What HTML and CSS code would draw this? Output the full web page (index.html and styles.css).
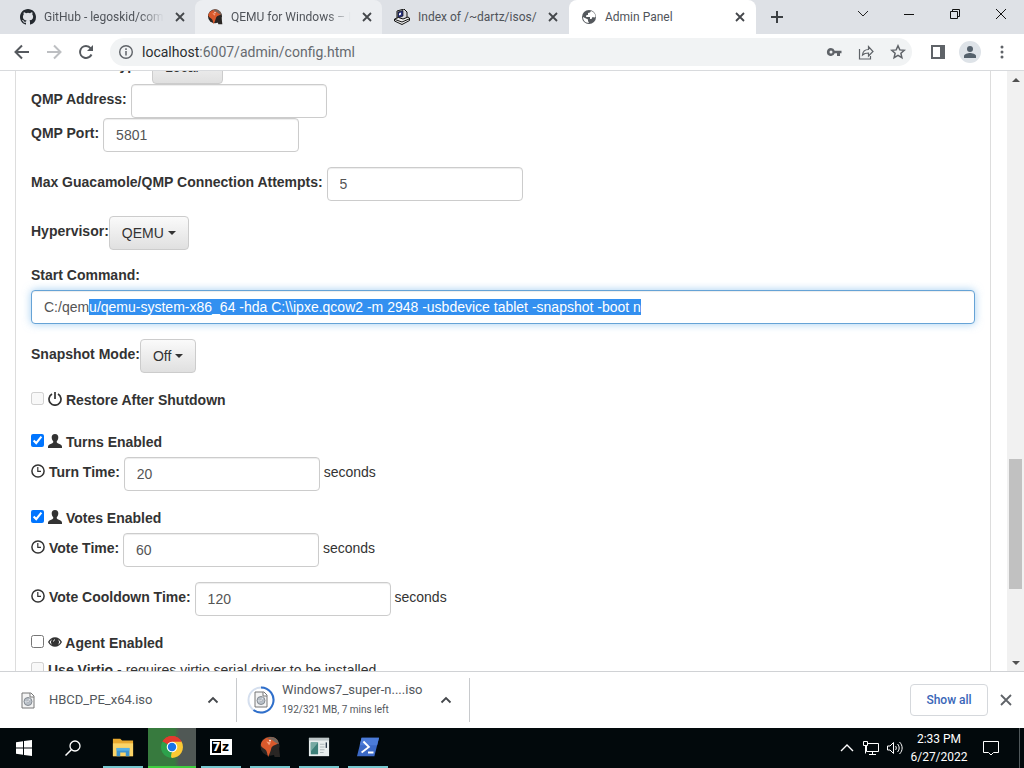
FILE: index.html
```html
<!DOCTYPE html>
<html lang="en">
<head>
    <meta charset="UTF-8">
    <meta name="viewport" content="width=device-width, initial-scale=1.0">
    <title>Admin Panel</title>
    <link rel="stylesheet" href="styles.css">
</head>
<body>
    <!-- shared icons -->
    <svg class="sprite" aria-hidden="true">
        <symbol id="close" viewBox="0 0 16 16"><path d="M4 4l8 8M12 4l-8 8" fill="none" stroke="currentColor" stroke-width="1.800"/></symbol>
        <symbol id="chevron" viewBox="0 0 16 16"><path d="M3.500 10.500L8 6l4.500 4.500" fill="none" stroke="currentColor" stroke-width="1.800"/></symbol>
        <symbol id="qemu" viewBox="0 0 24 24">
            <circle cx="12" cy="11" r="10.500" fill="#2a2624"/>
            <path d="M15 16l7-2 1 9h-6z" fill="#2a2624"/>
            <path d="M2 9C3 4 8 1 13 1c4 0 8 3 8 7-2 2-5 2-7 4-1 2-1 4-2 6l-2 5c-1-3-1-5-2-7-2-3-6-3-6-7z" fill="#d9592c"/>
            <path d="M13 1c5 0 8 3 9 8l-4-2-4-3-5-1z" fill="#75665d"/>
            <path d="M8 6l5 1-2 3z" fill="#f5a07c"/>
            <circle cx="12" cy="5" r="1" fill="#fff"/>
        </symbol>
        <symbol id="iso" viewBox="0 0 14 17">
            <path d="M1 1h9l3 3v12H1z" fill="#f4f4f4" stroke="#777"/>
            <path d="M9 1v4h4" fill="#fff" stroke="#777"/>
            <circle cx="7" cy="9.500" r="4" fill="#b9c0c8" stroke="#858b92"/>
            <path d="M4 10l3-.5 2-3" stroke="#e9edf0" fill="none"/>
            <circle cx="7" cy="9.500" r="1" fill="#fff" stroke="#858b92" stroke-width=".5"/>
        </symbol>
        <symbol id="user" viewBox="0 0 14 14"><path d="M7 0c2.300 0 3.500 1.600 3.300 3.600-.1 1.700-.7 2.900-1.500 3.700-.2 1 .1 1.500.9 1.900l2.800 1.200c1 .5 1.500 1.300 1.500 2.600v1H0v-1c0-1.300.5-2.100 1.500-2.600l2.800-1.200c.8-.4 1.100-.9.900-1.900-.8-.8-1.400-2-1.500-3.700C3.500 1.600 4.700 0 7 0z" fill="currentColor"/></symbol>
        <symbol id="time" viewBox="0 0 14 14"><circle cx="7" cy="7" r="6.100" fill="none" stroke="currentColor" stroke-width="1.500"/><path d="M6.800 3v4.300H10" fill="none" stroke="currentColor" stroke-width="1.200"/></symbol>
    </svg>

    <nav class="tab-strip">
        <div class="tab">
            <svg class="favicon" viewBox="0 0 16 16"><path fill="#24292f" d="M8 0C3.580 0 0 3.580 0 8c0 3.540 2.290 6.530 5.470 7.590.4.070.55-.17.55-.38 0-.19-.01-.82-.01-1.490-2.010.37-2.530-.49-2.690-.94-.09-.23-.48-.94-.82-1.130-.28-.15-.68-.52-.01-.53.63-.01 1.080.58 1.230.82.72 1.210 1.870.87 2.330.66.07-.52.28-.87.51-1.070-1.780-.2-3.640-.89-3.640-3.950 0-.87.31-1.590.82-2.150-.08-.2-.36-1.020.08-2.120 0 0 .67-.21 2.200.82a7.600 7.600 0 014 0c1.530-1.040 2.200-.82 2.200-.82.44 1.100.16 1.920.08 2.120.51.56.82 1.270.82 2.150 0 3.070-1.870 3.750-3.650 3.950.29.25.54.73.54 1.480 0 1.070-.01 1.930-.01 2.200 0 .21.15.46.55.38A8.010 8.010 0 0016 8c0-4.420-3.580-8-8-8z"/></svg>
            <a class="tab-title fade" href="#">GitHub - legoskid/com</a>
            <button class="tab-close" aria-label="Close tab"><svg><use href="#close"/></svg></button>
        </div>
        <div class="tab tab-hover">
            <svg class="favicon"><use href="#qemu"/></svg>
            <a class="tab-title fade" href="#">QEMU for Windows – I</a>
            <button class="tab-close" aria-label="Close tab"><svg><use href="#close"/></svg></button>
        </div>
        <div class="tab">
            <svg class="favicon" viewBox="0 0 16 16">
                <path d="M3 2l7-2 3 3v6l-7 3-3-3z" fill="#d6d6dc" stroke="#111"/>
                <path d="M4 3l5-1.500v5.500l-5 2z" fill="#27307f" stroke="#111" stroke-width=".7"/>
                <path d="M5 4.500l2-1v2l-2 1z" fill="#fff"/>
                <path d="M.5 10l4-1.500L9 10l5-2 1.500 1v2.500L8 15.500.5 12z" fill="#eee" stroke="#111"/>
                <path d="M1 10.500L8 13l7-3" stroke="#111" fill="none"/>
            </svg>
            <a class="tab-title" href="#">Index of /~dartz/isos/</a>
            <button class="tab-close" aria-label="Close tab"><svg><use href="#close"/></svg></button>
        </div>
        <div class="tab tab-active">
            <svg class="favicon" viewBox="0 0 16 16">
                <circle cx="8" cy="8" r="7" fill="#54585d"/>
                <path d="M10 2l-1 1.500-2 .5v2H5.500L5 8h4v2h1.500l1-2 2 .5 1-.5c0-3-2-5.500-4.500-6z" fill="#fff"/>
                <path d="M2 8l3 1.500 2 1V12l1 2c-4 0-6-3-6-6z" fill="#fff"/>
            </svg>
            <a class="tab-title" href="#">Admin Panel</a>
            <button class="tab-close" aria-label="Close tab"><svg><use href="#close"/></svg></button>
        </div>
        <button class="new-tab" aria-label="New tab"><svg viewBox="0 0 16 16"><path d="M8 2v12M2 8h12" stroke="#3c4043" stroke-width="2"/></svg></button>
        <div class="window-buttons">
            <button aria-label="Search tabs"><svg viewBox="0 0 12 12"><path d="M1 3l5 5 5-5" fill="none" stroke="#222"/></svg></button>
            <button aria-label="Minimize"><svg viewBox="0 0 12 12"><path d="M1 6.500h10" stroke="#111"/></svg></button>
            <button aria-label="Restore"><svg viewBox="0 0 12 12"><path d="M1.500 3.500h7v7h-7zM3.500 3.500v-2h7v7h-2" fill="none" stroke="#111"/></svg></button>
            <button aria-label="Close"><svg viewBox="0 0 12 12"><path d="M1 1l10 10M11 1L1 11" stroke="#111"/></svg></button>
        </div>
    </nav>

    <div class="toolbar">
        <button aria-label="Back"><svg viewBox="0 0 16 16"><path d="M15 8H2M8 1.500L1.500 8 8 14.500" fill="none" stroke="#55595e" stroke-width="2"/></svg></button>
        <button aria-label="Forward"><svg viewBox="0 0 16 16"><path d="M1 8h13M8 1.500L14.500 8 8 14.500" fill="none" stroke="#bdbfc2" stroke-width="2"/></svg></button>
        <button aria-label="Reload"><svg viewBox="0 0 16 16"><path d="M13.500 10.500A6 6 0 118 2c2 0 3.600.9 4.700 2.300" fill="none" stroke="#55595e" stroke-width="2"/><path d="M15 1v6H9z" fill="#55595e"/></svg></button>
        <div class="omnibox">
            <svg viewBox="0 0 16 16"><circle cx="8" cy="8" r="6.300" fill="none" stroke="#5f6368" stroke-width="1.400"/><path d="M8 7v4.500M8 4.300V6" stroke="#5f6368" stroke-width="1.500"/></svg>
            <a class="url" href="#"><span class="host">localhost</span>:6007/admin/config.html</a>
            <button aria-label="Passwords"><svg viewBox="0 0 16 16"><path d="M5 4a4 4 0 103.700 5.300H11V12h3V9.300h1.500V6.700H8.700A4 4 0 005 4zm0 2.500a1.500 1.500 0 110 3 1.500 1.500 0 010-3z" fill="#5f6368" fill-rule="evenodd"/></svg></button>
            <button aria-label="Share"><svg viewBox="0 0 16 16"><path d="M1.500 5v10h11v-3M4.500 11c.3-3.500 2.500-5.500 6-5.500V2.500l4.500 5-4.500 4.500V9C8 9 6 9.500 4.500 11z" fill="none" stroke="#5f6368" stroke-width="1.200"/></svg></button>
            <button aria-label="Bookmark"><svg viewBox="0 0 16 16"><path d="M8 1.800l1.800 4.100 4.500.4-3.400 3 1 4.400L8 11.400l-3.900 2.300 1-4.400-3.400-3 4.500-.4z" fill="none" stroke="#5f6368" stroke-width="1.500"/></svg></button>
        </div>
        <button aria-label="Side panel"><svg viewBox="0 0 16 16"><path d="M1 1h14v14H1zM3 3v10h7V3z" fill="#5f6368" fill-rule="evenodd"/></svg></button>
        <button class="profile" aria-label="Profile"><svg viewBox="0 0 16 16"><circle cx="8" cy="5" r="3" fill="#55616c"/><path d="M2 14v-2c0-2 4-3 6-3s6 1 6 3v2z" fill="#55616c"/></svg></button>
        <button class="menu" aria-label="Menu"><svg viewBox="0 0 16 16"><g fill="#5f6368"><circle cx="8" cy="3" r="1.500"/><circle cx="8" cy="8" r="1.500"/><circle cx="8" cy="13" r="1.500"/></g></svg></button>
    </div>

    <div class="viewport">
        <main class="page" id="page">
            <form class="panel">
                <div class="row tight">
                    <label for="connectionType">Connection Type:</label>
                    <select class="btn btn-local" id="connectionType"><option>Local</option></select>
                </div>
                <div class="row tight">
                    <label for="qmpAddress">QMP Address:</label>
                    <input class="field" type="text" id="qmpAddress">
                </div>
                <div class="row">
                    <label for="qmpPort">QMP Port:</label>
                    <input class="field" type="text" id="qmpPort" value="5801">
                </div>
                <div class="row">
                    <label for="attempts">Max Guacamole/QMP Connection Attempts:</label>
                    <input class="field" type="text" id="attempts" value="5">
                </div>
                <div class="row">
                    <label for="hypervisor">Hypervisor:</label><select class="btn btn-qemu" id="hypervisor"><option>QEMU</option></select>
                </div>
                <div class="group">
                    <label for="startCommand">Start Command:</label>
                    <input class="field" type="text" id="startCommand" spellcheck="false" value="C:/qemu/qemu-system-x86_64 -hda C:\\ipxe.qcow2 -m 2948 -usbdevice tablet -snapshot -boot n">
                </div>
                <div class="row">
                    <label for="snapshot">Snapshot Mode:</label><select class="btn btn-off" id="snapshot"><option>Off</option></select>
                </div>
                <div class="check spaced">
                    <input type="checkbox" id="restore" disabled>
                    <label for="restore"><svg class="glyph" viewBox="0 0 14 14"><path d="M4 2a6 6 0 106 0M7 0v7" fill="none" stroke="currentColor" stroke-width="1.700"/></svg> Restore After Shutdown</label>
                </div>
                <div class="check">
                    <input type="checkbox" id="turns" checked>
                    <label for="turns"><svg class="glyph"><use href="#user"/></svg> Turns Enabled</label>
                </div>
                <div class="row">
                    <label for="turnTime"><svg class="glyph"><use href="#time"/></svg> Turn Time:</label>
                    <input class="field" type="text" id="turnTime" value="20"> seconds
                </div>
                <div class="check">
                    <input type="checkbox" id="votes" checked>
                    <label for="votes"><svg class="glyph"><use href="#user"/></svg> Votes Enabled</label>
                </div>
                <div class="row">
                    <label for="voteTime"><svg class="glyph"><use href="#time"/></svg> Vote Time:</label>
                    <input class="field" type="text" id="voteTime" value="60"> seconds
                </div>
                <div class="row">
                    <label for="cooldown"><svg class="glyph"><use href="#time"/></svg> Vote Cooldown Time:</label>
                    <input class="field" type="text" id="cooldown" value="120"> seconds
                </div>
                <div class="check">
                    <input type="checkbox" id="agent">
                    <label for="agent"><svg class="glyph" viewBox="0 0 14 14"><path d="M0 7C3 .7 11 .7 14 7c-3 6.300-11 6.300-14 0z" fill="currentColor"/><path d="M1.500 7c.7-1.300 1.600-2.200 2.700-2.800a4.200 4.200 0 000 5.600C3.100 9.200 2.200 8.300 1.500 7zM12.500 7c-.7-1.300-1.600-2.200-2.700-2.800a4.200 4.200 0 010 5.600c1.100-.6 2-1.500 2.700-2.800z" fill="#fff"/><path d="M5.500 6.500c0-1 .6-1.600 1.500-1.700" stroke="#fff" fill="none"/></svg> Agent Enabled</label>
                </div>
                <div class="check">
                    <input type="checkbox" id="virtio" disabled>
                    <label for="virtio">Use Virtio</label> - requires virtio serial driver to be installed
                </div>
            </form>
        </main>
        <div class="scrollbar">
            <button aria-label="Scroll up"><svg viewBox="0 0 8 4"><path d="M0 4l4-4 4 4z" fill="#505050"/></svg></button>
            <div class="track"><div class="thumb"></div></div>
            <button aria-label="Scroll down"><svg viewBox="0 0 8 4"><path d="M0 0l4 4 4-4z" fill="#505050"/></svg></button>
        </div>
    </div>

    <footer class="downloads">
        <div class="download">
            <svg class="file" viewBox="0 0 14 17"><use href="#iso"/></svg>
            <div class="download-text"><a href="#">HBCD_PE_x64.iso</a></div>
            <button aria-label="Download options"><svg><use href="#chevron"/></svg></button>
        </div>
        <div class="download">
            <svg class="progress" viewBox="0 0 28 28">
                <circle cx="14" cy="14" r="12.500" fill="none" stroke="#d5dfee" stroke-width="2"/>
                <path d="M14 1.500a12.500 12.500 0 11-7.500 22.500" fill="none" stroke="#2f6fcb" stroke-width="2"/>
                <use href="#iso" x="7" y="5" width="14" height="17"/>
            </svg>
            <div class="download-text"><a href="#">Windows7_super-n....iso</a><small>192/321 MB, 7 mins left</small></div>
            <button aria-label="Download options"><svg><use href="#chevron"/></svg></button>
        </div>
        <button class="show-all">Show all</button>
        <button class="close-shelf" aria-label="Close downloads"><svg viewBox="0 0 16 16"><path d="M3 3l10 10M13 3L3 13" stroke="#5f6368" stroke-width="1.800"/></svg></button>
    </footer>

    <div class="taskbar">
        <button class="task" aria-label="Start"><svg viewBox="0 0 16 16"><path d="M0 2.200L7 1.200v6.300H0zM8 1l8-1v7.500H8zM0 8.500h7v6.300l-7-1zM8 8.500h8V16l-8-1z" fill="#fff"/></svg></button>
        <button class="task" aria-label="Search"><svg viewBox="0 0 16 16"><circle cx="10" cy="6" r="5" fill="none" stroke="#fff" stroke-width="1.300"/><path d="M6.500 9.500L.5 15.500" stroke="#fff" stroke-width="1.500"/></svg></button>
        <button class="task app" aria-label="File Explorer"><svg viewBox="0 0 24 24"><path d="M1 3h8l2 2h12v17H1z" fill="#e8a92f"/><path d="M1 8h22v14H1z" fill="#fbd467"/><path d="M5 13h14v9h-4v-4H9v4H5z" fill="#3d94cf"/><path d="M5 13h14v3H5z" fill="#56b0e4"/></svg></button>
        <button class="task app current" aria-label="Chrome"><svg viewBox="0 0 24 24">
            <path d="M12 12L2.500 6.500A11 11 0 0121.500 6.500z" fill="#e33b2e"/>
            <path d="M12 12L2.500 6.500A11 11 0 0012 23z" fill="#2da24c"/>
            <path d="M12 12l9.500-5.500A11 11 0 0112 23l-1-1z" fill="#fcc934"/>
            <path d="M7.700 14.500A5 5 0 0012 17l-3 5.500L2.500 6.500z" fill="#2da24c"/>
            <path d="M12 6.500h9.500L16.500 14l-4.500 9z" fill="#fcc934"/>
            <path d="M2.500 6.500A11 11 0 0121.500 6.500H12z" fill="#e33b2e"/>
            <circle cx="12" cy="12" r="5.300" fill="#fff"/><circle cx="12" cy="12" r="4.200" fill="#1a73e8"/></svg></button>
        <button class="task app" aria-label="7-Zip"><span class="sevenzip"><b>7</b><i>z</i></span></button>
        <button class="task app" aria-label="QEMU"><svg viewBox="0 0 24 24"><use href="#qemu"/></svg></button>
        <button class="task app" aria-label="Server"><svg viewBox="0 0 24 24"><path d="M1 2h22v20H1z" fill="#e8eeee"/><path d="M1 2h22v3H1z" fill="#bdc6c8"/><path d="M3 7h8v13H3z" fill="#3e8079"/><path d="M3 7h8l-8 10z" fill="#77aaa3"/><path d="M13 9h5M13 12h5M13 15h5M13 18h4" stroke="#aab3b5"/><path d="M20 7v6" stroke="#304050" stroke-width="1.500"/></svg></button>
        <button class="task app" aria-label="PowerShell"><svg viewBox="0 0 24 24"><path d="M5 2h19l-5 20H0z" fill="#3b69c6"/><path d="M5 2h19l-2 8H3z" fill="#4b7bd8"/><path d="M7 6l6 6-8 6M12 18h6" fill="none" stroke="#fff" stroke-width="2"/></svg></button>

        <div class="tray">
            <button aria-label="Hidden icons"><svg viewBox="0 0 16 16"><path d="M2 11l6-6 6 6" fill="none" stroke="#fff" stroke-width="1.400"/></svg></button>
            <button aria-label="Network"><svg viewBox="0 0 16 16"><path d="M5 3.500h10.500v8H3.500V6M.5 1.500h4v4h-4zM2.500 5.500v8M9.500 11.500v3M6 14.500h7" fill="none" stroke="#fff"/></svg></button>
            <button aria-label="Volume"><svg viewBox="0 0 16 16"><path d="M.5 6h2.500l3.500-3.500v11L3 10H.5zM8.500 6c1 1 1 3 0 4M10.500 4c2.200 2.300 2.200 5.700 0 8M12.500 2c3.500 3.500 3.500 8.500 0 12" fill="none" stroke="#fff"/></svg></button>
            <div class="clock"><time>2:33 PM</time><time>6/27/2022</time></div>
            <button aria-label="Notifications"><svg viewBox="0 0 16 16"><path d="M.5 1.500h15v11h-5L8 15l-2.500-2.500h-5z" fill="none" stroke="#fff"/></svg></button>
        </div>
    </div>

    <script src="script.js"></script>
</body>
</html>
```
FILE: styles.css
```css
* {
    box-sizing: border-box;
}

body {
    margin: 0;
    height: 100vh;
    display: flex;
    flex-direction: column;
    overflow: hidden;
    background: #fff;
    color: #333;
    font-family: Roboto, "Open Sans", sans-serif;
    font-size: 12px;
}

button {
    display: flex;
    align-items: center;
    justify-content: center;
    padding: 0;
    border: none;
    background: none;
    color: #44474b;
    font-family: inherit;
}

svg {
    display: block;
    width: 16px;
    height: 16px;
    flex: none;
}

a {
    color: inherit;
    text-decoration: none;
}

.sprite {
    display: none;
}

/* tabs */
.tab-strip {
    display: flex;
    height: 34px;
    padding-left: 8px;
    background: #dee1e6;
    flex: none;
}

.tab {
    display: flex;
    align-items: center;
    flex: 0 1 187px;
    min-width: 0;
    padding: 0 8px 0 12px;
    gap: 8px;
    color: #50545a;
}

.tab-hover {
    background: #eceef1;
    border-radius: 8px 8px 0 0;
}

.tab-active {
    background: #fff;
    border-radius: 8px 8px 0 0;
}

.tab-title {
    flex: 1;
    white-space: nowrap;
}

.tab-title.fade {
    -webkit-mask-image: linear-gradient(to right, #000 80%, transparent);
    mask-image: linear-gradient(to right, #000 80%, transparent);
}

.new-tab {
    width: 42px;
}

.window-buttons {
    display: flex;
    align-items: flex-start;
    margin-left: auto;
}

.window-buttons button {
    width: 46px;
    height: 28px;
}

.window-buttons svg {
    width: 12px;
    height: 12px;
}

/* toolbar */
.toolbar {
    display: flex;
    align-items: center;
    height: 37px;
    padding: 0 6px;
    border-bottom: 1px solid #d8dadd;
    flex: none;
}

.toolbar > button {
    width: 32px;
}

.omnibox {
    display: flex;
    align-items: center;
    flex: 1;
    height: 28px;
    margin: 0 10px 0 8px;
    padding: 0 2px 0 8px;
    gap: 8px;
    border-radius: 14px;
    background: #f1f3f4;
}

.omnibox button {
    width: 24px;
    height: 24px;
}

.url {
    flex: 1;
    font-size: 14px;
    color: #666a6f;
}

.host {
    color: #2b2d30;
}

.toolbar .profile {
    width: 22px;
    height: 22px;
    margin: 0 5px;
    border-radius: 50%;
    background: #dee3e8;
}

/* scrolled page */
.viewport {
    display: flex;
    flex: 1;
    min-height: 0;
}

.page {
    flex: 1;
    overflow: hidden;
    padding: 0 16px 0 15px;
    font-family: "Liberation Sans", Arial, sans-serif;
    font-size: 14px;
    line-height: 20px;
}

.panel {
    padding: 15px 15px 60px;
    border: 1px solid #ddd;
}

.panel label {
    font-weight: bold;
}

.row {
    height: 34px;
    margin-bottom: 15px;
    white-space: nowrap;
}

.row.tight {
    margin-bottom: 0;
}

.field,
.btn {
    height: 34px;
    margin: 0;
    padding: 6px 12px;
    border: 1px solid #ccc;
    border-radius: 4px;
    font-family: inherit;
    font-size: 14px;
    line-height: 20px;
    vertical-align: -2px;
}

.field {
    width: 196px;
    color: #555;
    background: #fff;
    box-shadow: inset 0 1px 1px rgba(0, 0, 0, 0.075);
}

.field:focus {
    border-color: #66a3d6;
    outline: none;
    box-shadow: inset 0 1px 1px rgba(0, 0, 0, 0.075), 0 0 8px rgba(102, 175, 233, 0.6);
}

.field::selection {
    background: #3390f0;
    color: #fff;
}

.btn {
    appearance: none;
    color: #333;
    background: url("data:image/svg+xml,%3Csvg xmlns='http://www.w3.org/2000/svg' width='8' height='4'%3E%3Cpath d='M0 0h8L4 4z' fill='%23333'/%3E%3C/svg%3E") no-repeat right 12px center, linear-gradient(#fafafa, #e0e0e0);
}

.btn-local {
    width: 71px;
}

.btn-qemu {
    width: 80px;
}

.btn-off {
    width: 56px;
}

.group {
    margin-bottom: 15px;
}

.group label {
    display: block;
    margin-bottom: 5px;
}

.group .field {
    display: block;
    width: 100%;
}

.check {
    display: flex;
    align-items: center;
    height: 22px;
    margin: 16px 0 4px;
    gap: 4px;
}

.check.spaced {
    margin-bottom: 20px;
}

.check + .check {
    margin-top: 5px;
}

.check input {
    width: 13px;
    height: 13px;
    margin: 0 0 4px;
}

.glyph {
    display: inline-block;
    width: 14px;
    height: 14px;
    vertical-align: -1px;
}

/* scrollbar */
.scrollbar {
    display: flex;
    flex-direction: column;
    width: 17px;
    background: #f1f1f1;
}

.scrollbar button {
    height: 17px;
}

.scrollbar svg {
    width: 8px;
    height: 4px;
}

.track {
    display: flex;
    flex-direction: column;
    justify-content: flex-end;
    flex: 1;
    padding: 0 2px 65px;
}

.thumb {
    height: 26%;
    background: #c1c1c1;
}

/* downloads */
.downloads {
    display: flex;
    align-items: center;
    height: 57px;
    padding-right: 10px;
    border-top: 1px solid #d0d2d5;
    flex: none;
}

.download {
    display: flex;
    align-items: center;
    width: 233px;
    height: 44px;
    padding: 0 15px 0 10px;
    gap: 7px;
    border-right: 1px solid #c8cacd;
}

.download:first-child {
    width: 237px;
    padding-left: 20px;
    gap: 13px;
}

.download .file {
    height: 17px;
}

.download .progress {
    width: 28px;
    height: 28px;
}

.download-text {
    display: flex;
    flex-direction: column;
    flex: 1;
    white-space: nowrap;
    font-size: 13px;
    line-height: 20px;
    color: #54585d;
}

.download-text small {
    font-size: 10px;
}

.show-all {
    width: 78px;
    height: 32px;
    margin: 0 10px 0 auto;
    border: 1px solid #d5d8dc;
    border-radius: 4px;
    color: #3a66b8;
    font-size: 12px;
    font-weight: 500;
}

/* taskbar */
.taskbar {
    display: flex;
    height: 40px;
    background: #02090c;
    flex: none;
}

.task {
    width: 48px;
    margin-right: 1px;
}

.task.app {
    border-bottom: 2px solid #76c7cf;
    width: 40px;
    margin: 0 4px 0 5px;
}

.task.app svg {
    width: 22px;
    height: 22px;
}

.task.current {
    width: 48px;
    margin: 0 0 0 1px;
    border-color: #3fcf3f;
    background: linear-gradient(to right, #377a3e 55%, #505855 65%);
}

.task.current svg {
    width: 24px;
    height: 24px;
}

.sevenzip {
    display: flex;
    width: 22px;
    height: 16px;
    border: 2px solid #fff;
    background: #fff;
    font-family: "DejaVu Sans", sans-serif;
    font-size: 12px;
    font-weight: bold;
    line-height: 12px;
    color: #fff;
}

.sevenzip b {
    flex: 1;
    background: #000;
}

.sevenzip i {
    flex: 1;
    font-style: normal;
    color: #000;
}

.tray {
    display: flex;
    align-items: center;
    margin-left: auto;
    margin-right: 4px;
    padding-right: 8px;
    border-right: 1px solid #50585b;
}

.tray button {
    width: 24px;
    height: 40px;
}

.clock {
    display: flex;
    flex-direction: column;
    align-items: center;
    width: 64px;
    color: #fff;
    line-height: 18px;
}

.tray .clock + button {
    width: 40px;
}
```
FILE: script.js
```js
const page = document.getElementById('page');
const command = document.getElementById('startCommand');

command.focus({ preventScroll: true });
command.setSelectionRange(6, command.value.length);
command.scrollLeft = 0;

page.scrollTop = 37;
```
